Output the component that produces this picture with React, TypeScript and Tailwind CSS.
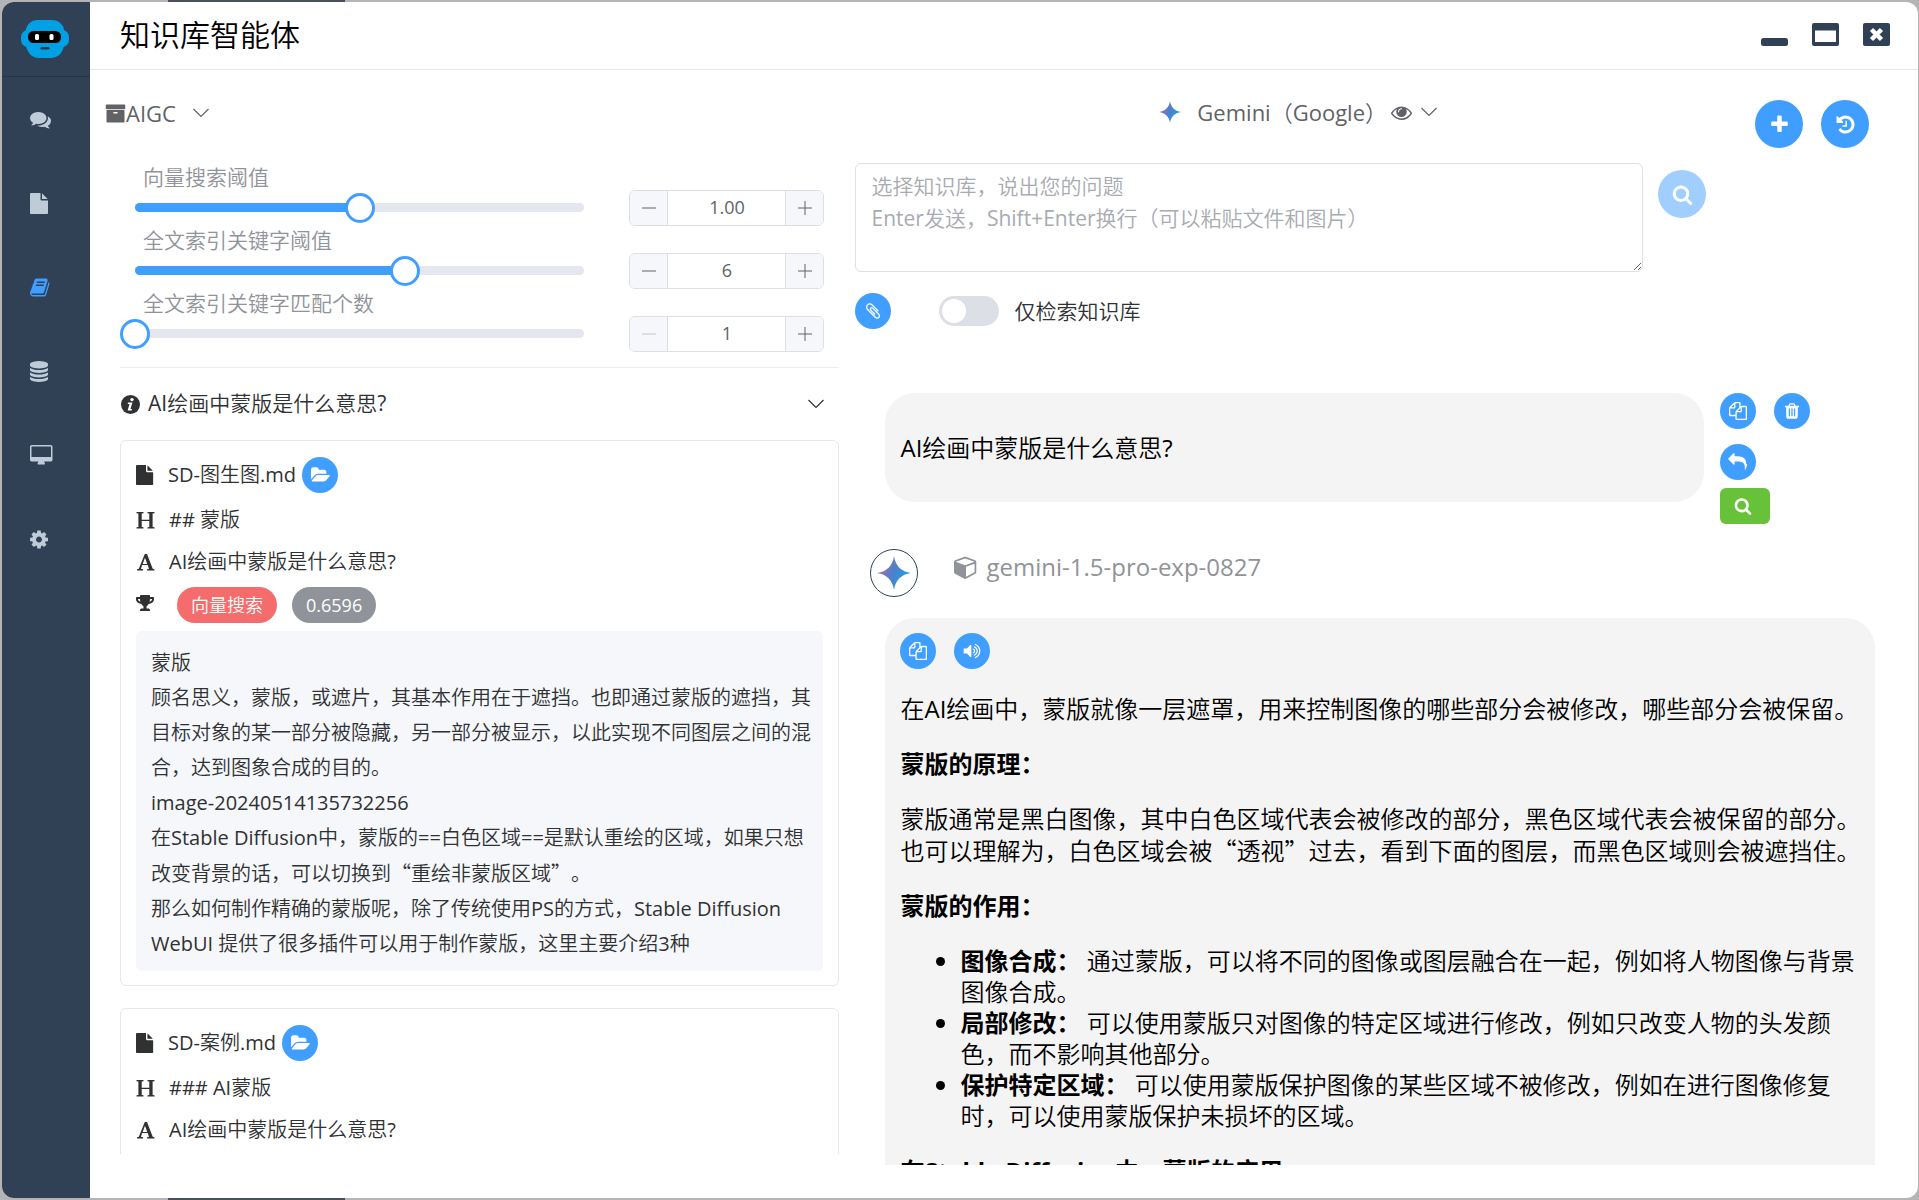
import React, { ReactNode, useState } from 'react';
import { FaTrophy } from 'react-icons/fa';
import clsx from 'clsx';

// ============================================================================
// Icons
// ============================================================================

const ICONS = {
  comments:
    'M1408 768q0 139-94 257t-256.5 186.5-353.5 68.5q-86 0-176-16-124 88-278 128-36 9-86 16h-3q-11 0-20.5-8t-11.5-21q-1-3-1-6.5t.5-6.5 2-6l2.5-5t3.5-5.5 4-5 4.5-5 4-4.5q5-6 23-25t26-29.5 22.5-29 25-38.5 20.5-44q-124-72-195-177t-71-224q0-139 94-257t256.5-186.5 353.5-68.5 353.5 68.5 256.5 186.5 94 257zm384 256q0 120-71 224.5t-195 176.5q10 24 20.5 44t25 38.5 22.5 29 26 29.5 23 25q1 1 4 4.500t4.500 5 4 5 3.500 5.500l2.500 5t2 6 .5 6.500-1 6.500q-3 14-13 22t-22 7q-50-7-86-16-154-40-278-128-90 16-176 16-271 0-472-132 58 4 88 4 161 0 309-45t264-129q125-92 192-212t67-254q0-77-23-152 129 71 204 178t75 230z',
  file: 'M1024 512v-472q22 14 36 28l408 408q14 14 28 36h-472zm-128 32q0 40 28 68t68 28h544v1056q0 40-28 68t-68 28h-1344q-40 0-68-28t-28-68v-1600q0-40 28-68t68-28h800v544z',
  book: 'M1639 478q40 57 18 129l-275 906q-19 64-76.5 107.5t-122.5 43.5h-923q-77 0-148.5-53.5t-99.5-131.5q-24-67-2-127 0-4 3-27t4-37q1-8-3-21.5t-3-19.5q2-11 8-21t16.5-23.5 16.5-23.5q23-38 45-91.5t30-91.5q3-10 .5-30t-.5-28q3-11 17-28t17-23q21-36 42-92t25-90q1-9-2.5-32t.5-28q4-13 22-30.5t22-22.5q19-26 42.5-84.5t27.5-96.5q1-8-3-25.5t-2-26.5q2-8 9-18t18-23 17-21q8-12 16.5-30.5t15-35 16-36 19.5-32 26.5-23.5 36-11.5 47.5 5.5l-1 3q38-9 51-9h761q74 0 114 56t18 130l-274 906q-36 119-71.5 153.5t-128.5 34.5h-869q-27 0-38 15-11 16-1 43 24 70 144 70h923q29 0 56-15.5t35-41.5l300-987q7-22 5-57 38 15 59 43zm-1064 2q-4 13 2 22.5t20 9.5h608q13 0 25.5-9.5t16.5-22.5l21-64q4-13-2-22.5t-20-9.5h-608q-13 0-25.5 9.5t-16.5 22.5zm-83 256q-4 13 2 22.5t20 9.5h608q13 0 25.5-9.5t16.5-22.5l21-64q4-13-2-22.5t-20-9.5h-608q-13 0-25.5 9.5t-16.5 22.5z',
  database:
    'M768 768q237 0 443-43t325-127v170q0 69-103 128t-280 93.5-385 34.5-385-34.5-280-93.5-103-128v-170q119 84 325 127t443 43zm0 768q237 0 443-43t325-127v170q0 69-103 128t-280 93.5-385 34.5-385-34.5-280-93.5-103-128v-170q119 84 325 127t443 43zm0-384q237 0 443-43t325-127v170q0 69-103 128t-280 93.5-385 34.5-385-34.5-280-93.5-103-128v-170q119 84 325 127t443 43zm0-1152q208 0 385 34.5t280 93.5 103 128v128q0 69-103 128t-280 93.5-385 34.5-385-34.5-280-93.5-103-128v-128q0-69 103-128t280-93.5 385-34.5z',
  desktop:
    'M1792 992v-832q0-13-9.5-22.5t-22.5-9.5h-1600q-13 0-22.5 9.5t-9.5 22.5v832q0 13 9.5 22.5t22.5 9.5h1600q13 0 22.5-9.5t9.5-22.5zm128-832v1088q0 66-47 113t-113 47h-544q0 37 16 77.5t32 71 16 43.5q0 26-19 45t-45 19h-512q-26 0-45-19t-19-45q0-14 16-44t32-70 16-78h-544q-66 0-113-47t-47-113v-1088q0-66 47-113t113-47h1600q66 0 113 47t47 113z',
  cog: 'M1024 896q0-106-75-181t-181-75-181 75-75 181 75 181 181 75 181-75 75-181zm512-109v222q0 12-8 23t-20 13l-185 28q-19 54-39 91 35 50 107 138 10 12 10 25t-9 23q-27 37-99 108t-94 71q-12 0-26-9l-138-108q-44 23-91 38-16 136-29 186-7 28-36 28h-222q-14 0-24.5-8.5t-11.5-21.5l-28-184q-49-16-90-37l-141 107q-10 9-25 9-14 0-25-11-126-114-165-168-7-10-7-23 0-12 8-23 15-21 51-66.5t54-70.5q-27-50-41-99l-183-27q-13-2-21-12.5t-8-23.5v-222q0-12 8-23t19-13l186-28q14-46 39-92-40-57-107-138-10-12-10-24 0-10 9-23 26-36 98.5-107.5t94.5-71.5q13 0 26 10l138 107q44-23 91-38 16-136 29-186 7-28 36-28h222q14 0 24.5 8.5t11.5 21.5l28 184q49 16 90 37l142-107q9-9 24-9 13 0 25 10 129 119 165 170 7 8 7 22 0 12-8 23-15 21-51 66.5t-54 70.5q26 50 41 98l183 28q13 2 21 12.5t8 23.5z',
  search:
    'M1216 832q0-185-131.5-316.5t-316.5-131.5-316.5 131.5-131.5 316.5 131.5 316.5 316.5 131.5 316.5-131.5 131.5-316.5zm512 832q0 52-38 90t-90 38q-54 0-90-38l-343-342q-179 124-399 124-143 0-273.5-55.5t-225-150-150-225-55.5-273.5 55.5-273.5 150-225 225-150 273.5-55.5 273.5 55.5 225 150 150 225 55.5 273.5q0 220-124 399l343 343q37 37 37 90z',
  plus: 'M1600 736v192q0 40-28 68t-68 28h-416v416q0 40-28 68t-68 28h-192q-40 0-68-28t-28-68v-416h-416q-40 0-68-28t-28-68v-192q0-40 28-68t68-28h416v-416q0-40 28-68t68-28h192q40 0 68 28t28 68v416h416q40 0 68 28t28 68z',
  history:
    'M1664 896q0 156-61 298t-164 245-245 164-298 61q-172 0-327-72.5t-264-204.5q-7-10-6.5-22.5t8.5-20.5l137-138q10-9 25-9 16 2 23 12 73 95 179 147t225 52q104 0 198.5-40.5t163.5-109.5 109.5-163.5 40.5-198.5-40.5-198.5-109.5-163.5-163.5-109.5-198.5-40.5q-98 0-188 35.5t-160 101.5l137 138q31 30 14 69-17 40-59 40h-448q-26 0-45-19t-19-45v-448q0-42 40-59 39-17 69 14l130 129q107-101 244.5-156.5t284.5-55.5q156 0 298 61t245 164 164 245 61 298zm-640-288v448q0 14-9 23t-23 9h-320q-14 0-23-9t-9-23v-64q0-14 9-23t23-9h224v-352q0-14 9-23t23-9h64q14 0 23 9t9 23z',
  copy: 'M1696 384q40 0 68 28t28 68v1216q0 40-28 68t-68 28h-960q-40 0-68-28t-28-68v-288h-544q-40 0-68-28t-28-68v-672q0-40 20-88t48-76l408-408q28-28 76-48t88-20h416q40 0 68 28t28 68v328q68-40 128-40h416zm-544 213l-299 299h299v-299zm-640-384l-299 299h299v-299zm196 647l316-316v-416h-384v416q0 40-28 68t-68 28h-416v640h512v-256q0-40 20-88t48-76zm956 804v-1152h-384v416q0 40-28 68t-68 28h-416v640h896z',
  trash:
    'M704 1376v-704q0-14-9-23t-23-9h-64q-14 0-23 9t-9 23v704q0 14 9 23t23 9h64q14 0 23-9t9-23zm256 0v-704q0-14-9-23t-23-9h-64q-14 0-23 9t-9 23v704q0 14 9 23t23 9h64q14 0 23-9t9-23zm256 0v-704q0-14-9-23t-23-9h-64q-14 0-23 9t-9 23v704q0 14 9 23t23 9h64q14 0 23-9t9-23zm-544-992h448l-48-117q-7-9-17-11h-317q-10 2-17 11zm928 32v64q0 14-9 23t-23 9h-96v948q0 83-47 143.5t-113 60.5h-832q-66 0-113-58.5t-47-141.5v-952h-96q-14 0-23-9t-9-23v-64q0-14 9-23t23-9h309l70-167q15-37 54-63t79-26h320q40 0 79 26t54 63l70 167h309q14 0 23 9t9 23z',
  reply:
    'M1792 1120q0 166-127 451-3 7-10.5 24t-13.5 30-13 22q-12 17-28 17-15 0-23.5-10t-8.5-25q0-9 2.5-26.5t2.5-23.5q5-68 5-123 0-112-19.5-200.5t-54-153.5-89-112-115.5-76-148.5-46-171.5-20-200-6h-224v256q0 26-19 45t-45 19-45-19l-512-512q-19-19-19-45t19-45l512-512q19-19 45-19t45 19 19 45v256h224q713 0 875 403 53 134 53 333z',
  folderOpen:
    'M1879 952q0 31-31 66l-336 396q-43 51-120.5 86.5t-143.5 35.5h-1088q-34 0-60.5-13t-26.5-43q0-31 31-66l336-396q43-51 120.5-86.5t143.5-35.5h1088q34 0 60.5 13t26.5 43zm-343-344v160h-832q-94 0-197 47.5t-164 119.5l-337 396-5 6q0-4-.5-12.5t-.5-12.5v-960q0-92 66-158t158-66h320q92 0 158 66t66 158v32h544q92 0 158 66t66 158z',
  paperclip:
    'M1596 1385q0 117-79 196t-196 79q-135 0-235-100l-777-776q-113-115-113-271 0-159 110-270t269-111q158 0 273 113l605 606q10 10 10 22 0 16-30.5 46.5t-46.5 30.5q-13 0-23-10l-606-607q-79-77-181-77-106 0-179 75t-73 181q0 105 76 181l776 777q63 63 145 63 64 0 106-42t42-106q0-82-63-145l-581-581q-26-24-60-24-29 0-48 19t-19 48q0 32 25 59l410 410q10 10 10 22 0 16-31 47t-47 31q-12 0-22-10l-410-410q-63-61-63-149 0-82 57-139t139-57q88 0 149 63l581 581q100 98 100 235z',
  volume:
    'M832 352v1088q0 26-19 45t-45 19-45-19l-333-333h-262q-26 0-45-19t-19-45v-384q0-26 19-45t45-19h262l333-333q19-19 45-19t45 19 19 45zm384 544q0 76-42.5 141.5t-112.5 93.5q-10 5-25 5-26 0-45-18.5t-19-45.5q0-21 12-35.5t29-25 34-23 29-36 12-56.5-12-56.5-29-36-34-23-29-25-12-35.5q0-27 19-45.5t45-18.5q15 0 25 5 70 27 112.5 93t42.5 142zm256 0q0 153-85 282.5t-225 188.5q-13 5-25 5-27 0-46-19t-19-45q0-39 39-59 56-29 76-44 74-54 115.5-135.5t41.5-173.5-41.5-173.5-115.5-135.5q-20-15-76-44-39-20-39-59 0-26 19-45t45-19q13 0 26 5 140 59 225 188.5t85 282.5zm256 0q0 230-127 422.5t-338 283.5q-13 5-26 5-26 0-45-19t-19-45q0-36 39-59 7-4 22.5-10.5t22.5-10.5q46-25 82-51 123-91 192-227t69-289-69-289-192-227q-36-26-82-51-7-4-22.5-10.5t-22.5-10.5q-39-23-39-59 0-26 19-45t45-19q13 0 26 5 211 91 338 283.5t127 422.5z',
  archive:
    'M1088 832q0-26-19-45t-45-19h-256q-26 0-45 19t-19 45 19 45 45 19h256q26 0 45-19t19-45zm576-192v960q0 26-19 45t-45 19h-1408q-26 0-45-19t-19-45v-960q0-26 19-45t45-19h1408q26 0 45 19t19 45zm64-448v256q0 26-19 45t-45 19h-1536q-26 0-45-19t-19-45v-256q0-26 19-45t45-19h1536q26 0 45 19t19 45z',
  eye: 'M1664 960q-152-236-381-353 61 104 61 225 0 185-131.5 316.5t-316.5 131.5-316.5-131.5-131.5-316.5q0-121 61-225-229 117-381 353 133 205 333.5 326.5t434.5 121.5 434.5-121.5 333.5-326.5zm-720-384q0-20-14-34t-34-14q-125 0-214.5 89.5t-89.5 214.5q0 20 14 34t34 14 34-14 14-34q0-86 61-147t147-61q20 0 34-14t14-34zm848 384q0 34-20 69-140 230-376.5 368.5t-499.5 138.5-499.5-139-376.5-368q-20-35-20-69t20-69q140-229 376.5-368t499.5-139 499.5 139 376.5 368q20 35 20 69z',
  cube: 'M896 1629l640-349v-636l-640 233v752zm-64-865l698-254-698-254-698 254zm832-252v768q0 35-18 65t-49 47l-704 384q-28 16-61 16t-61-16l-704-384q-31-17-49-47t-18-65v-768q0-40 23-73t61-47l704-256q22-8 44-8t44 8l704 256q38 14 61 47t23 73z',
};

type IconName = keyof typeof ICONS;

interface IconProps {
  name: IconName;
  className?: string;
}

function Icon({ name, className = 'size-[21px]' }: IconProps) {
  return (
    <svg
      viewBox="0 0 1792 1792"
      fill="currentColor"
      aria-hidden="true"
      className={clsx('shrink-0 overflow-visible', className)}
    >
      <path d={ICONS[name]} />
    </svg>
  );
}

function Chevron() {
  return (
    <svg viewBox="0 0 18 18" className="size-[18px] shrink-0" fill="none" stroke="currentColor" strokeWidth="1.2" aria-hidden="true">
      <path d="M1.5 5 9 12.500l7.500-7.500" />
    </svg>
  );
}

function InfoIcon() {
  return (
    <svg viewBox="0 0 19 19" className="mr-2 ml-px size-[19px] shrink-0" aria-hidden="true">
      <circle cx="9.500" cy="9.500" r="9.500" fill="currentColor" />
      <circle cx="11" cy="4.600" r="1.700" fill="#fff" />
      <path d="M7 7.400h4.400l-1.900 6.600h1.500l-.4 1.400H6.600l1.900-6.500H6.700z" fill="#fff" />
    </svg>
  );
}

// Slab "H" used in front of a matched heading
function HeadingIcon() {
  return (
    <svg viewBox="0 0 19 19" className="mr-3.5 size-[19px] shrink-0" fill="currentColor" aria-hidden="true">
      <path d="M.5 1h7v1.200l-1.800.3V8.700h7.600V2.500l-1.800-.3V1h7v1.200l-1.900.3v13.500l1.900.3v1.200h-7v-1.200l1.800-.3v-5.900H5.700V16l1.800.3v1.200h-7v-1.200l1.900-.3V2.500L.5 2.200z" />
    </svg>
  );
}

function FontIcon() {
  return (
    <svg viewBox="0 0 19 19" className="mr-3.5 size-[19px] shrink-0" fill="currentColor" fillRule="evenodd" aria-hidden="true">
      <path d="M8.800 1h2.200l5.700 14.800 1.700.4v1.300h-7.400v-1.300l2-.3-1.300-3.800H6.200l-1.300 3.700 2.200.4v1.300H1v-1.300l1.800-.4zM9 4.800 6.700 10.900h4.500z" />
    </svg>
  );
}

function GeminiStar({ id, className }: { id: string; className?: string }) {
  return (
    <svg viewBox="0 0 24 24" className={className} aria-hidden="true">
      <defs>
        <linearGradient id={id} x1="2" y1="8" x2="22" y2="16" gradientUnits="userSpaceOnUse">
          <stop offset="0" stopColor="#a66fb5" />
          <stop offset="0.45" stopColor="#4f7fcb" />
          <stop offset="1" stopColor="#1ba1e3" />
        </linearGradient>
      </defs>
      <path d="M12 0c.9 6.800 5.200 11.100 12 12-6.800.9-11.100 5.200-12 12-.9-6.800-5.200-11.100-12-12 6.800-.9 11.100-5.200 12-12z" fill={`url(#${id})`} />
    </svg>
  );
}

function RobotLogo() {
  return (
    <svg viewBox="0 0 48 38" className="h-[38px] w-12" aria-label="logo">
      <rect x="0" y="10" width="48" height="17" rx="7" fill="#00a0e4" />
      <path d="M17 0h14c7 0 11 4 12.500 11 .8 4 .8 10-.5 15-1.500 7-6 12-13 12H18C11 38 6.500 33 5 26c-1.300-5-1.300-11-.5-15C6 4 10 0 17 0z" fill="#00a0e4" />
      <rect x="7" y="11" width="33" height="12" rx="5.500" fill="#000" />
      <rect x="14" y="14" width="4" height="6" rx="1.500" fill="#fff" />
      <rect x="28.500" y="14" width="4" height="6" rx="1.500" fill="#fff" />
      <rect x="19.500" y="27" width="9" height="2.600" rx="1.300" fill="#12384d" />
    </svg>
  );
}

// ============================================================================
// Shared controls
// ============================================================================

interface RoundButtonProps {
  icon: IconName;
  label: string;
  large?: boolean;
  disabled?: boolean;
}

function RoundButton({ icon, label, large, disabled }: RoundButtonProps) {
  return (
    <button
      type="button"
      aria-label={label}
      disabled={disabled}
      className={clsx(
        'flex shrink-0 items-center justify-center rounded-full text-white',
        large ? 'size-12' : 'size-9',
        disabled ? 'bg-[#a0cfff]' : 'bg-[#409eff]'
      )}
    >
      <Icon name={icon} className={large ? 'size-[21px]' : 'size-[18px]'} />
    </button>
  );
}

// ============================================================================
// Sidebar
// ============================================================================

const NAV_ITEMS: { icon: IconName; label: string; active?: boolean }[] = [
  { icon: 'comments', label: '聊天' },
  { icon: 'file', label: '文件' },
  { icon: 'book', label: '知识库', active: true },
  { icon: 'database', label: '数据' },
  { icon: 'desktop', label: '桌面' },
  { icon: 'cog', label: '设置' },
];

function Sidebar() {
  return (
    <aside className="w-22 shrink-0 bg-[#304156]">
      <div className="flex h-[75px] items-center border-b border-[#25344a] pl-[19px]">
        <RobotLogo />
      </div>
      <nav>
        {NAV_ITEMS.map((item) => (
          <a
            key={item.icon}
            href={`#${item.icon}`}
            aria-label={item.label}
            className={clsx(
              'flex h-21 items-center pl-7',
              item.active ? 'text-[#409eff]' : 'text-[#bfcbd9]'
            )}
          >
            <Icon name={item.icon} />
          </a>
        ))}
      </nav>
    </aside>
  );
}

// ============================================================================
// Title bar
// ============================================================================

function TitleBar() {
  return (
    <header className="flex h-17 shrink-0 items-center justify-between border-b border-[#e4e7ed] pr-7 pb-0.5 pl-[30px]">
      <h1 className="text-[30px] leading-9 text-black">知识库智能体</h1>
      <div className="flex gap-6 text-[#304156]">
        <button type="button" aria-label="最小化">
          <svg viewBox="0 0 27 23" className="h-[23px] w-[27px]" fill="currentColor">
            <rect y="15" width="27" height="8" rx="2.500" />
          </svg>
        </button>
        <button type="button" aria-label="最大化">
          <svg viewBox="0 0 27 23" className="h-[23px] w-[27px]" fill="currentColor" fillRule="evenodd">
            <path d="M2 0h23a2 2 0 0 1 2 2v19a2 2 0 0 1-2 2H2a2 2 0 0 1-2-2V2a2 2 0 0 1 2-2zM3 7.500v11.500h21V7.500z" />
          </svg>
        </button>
        <button type="button" aria-label="关闭">
          <svg viewBox="0 0 27 23" className="h-[23px] w-[27px]">
            <rect width="27" height="23" rx="2" fill="currentColor" />
            <path d="M8.500 6.500l10 10M18.500 6.500l-10 10" stroke="#fff" strokeWidth="4.500" />
          </svg>
        </button>
      </div>
    </header>
  );
}

// ============================================================================
// Search settings
// ============================================================================

interface SliderRowProps {
  id: string;
  label: string;
  min: number;
  max: number;
  step: number;
  initial: number;
  digits?: number;
}

function SliderRow({ id, label, min, max, step, initial, digits = 0 }: SliderRowProps) {
  const [value, setValue] = useState(initial);
  const percent = ((value - min) / (max - min)) * 100;
  const change = (next: number) => setValue(Math.min(max, Math.max(min, next)));

  return (
    <div className="flex h-[63px] items-end justify-between">
      <div className="flex-1">
        <label htmlFor={id} className="block pl-2 text-[21px] leading-7 text-[#909399]">
          {label}
        </label>
        <div className="relative mt-3 mb-3.5 h-[9px] rounded-full bg-[#e4e7ed]">
          <div className="h-full rounded-full bg-[#409eff]" style={{ width: `${percent}%` }} />
          <input
            id={id}
            type="range"
            min={min}
            max={max}
            step={step}
            value={value}
            onChange={(e) => change(Number(e.target.value))}
            className="absolute -inset-x-[15px] -top-[11px] h-[31px] appearance-none bg-transparent [&::-webkit-slider-thumb]:size-[30px] [&::-webkit-slider-thumb]:appearance-none [&::-webkit-slider-thumb]:rounded-full [&::-webkit-slider-thumb]:border-3 [&::-webkit-slider-thumb]:border-[#409eff] [&::-webkit-slider-thumb]:bg-white"
          />
        </div>
      </div>
      <div className="ml-[45px] flex h-9 w-[195px] overflow-hidden rounded-md border border-[#dcdfe6] text-[#606266]">
        <button
          type="button"
          aria-label="减少"
          disabled={value <= min}
          onClick={() => change(value - step)}
          className="flex w-[38px] items-center justify-center border-r border-[#dcdfe6] bg-[#f5f7fa] disabled:text-[#c0c4cc]"
        >
          <svg viewBox="0 0 14 14" className="size-3.5" stroke="currentColor" strokeWidth="1">
            <path d="M0 7h14" />
          </svg>
        </button>
        <input
          type="text"
          aria-label={`${label}数值`}
          value={value.toFixed(digits)}
          onChange={(e) => change(Number(e.target.value) || min)}
          className="min-w-0 flex-1 pb-0.5 text-center text-[18px] leading-8"
        />
        <button
          type="button"
          aria-label="增加"
          onClick={() => change(value + step)}
          className="flex w-[38px] items-center justify-center border-l border-[#dcdfe6] bg-[#f5f7fa]"
        >
          <svg viewBox="0 0 14 14" className="size-3.5" stroke="currentColor" strokeWidth="1">
            <path d="M0 7h14M7 0v14" />
          </svg>
        </button>
      </div>
    </div>
  );
}

// ============================================================================
// Search results
// ============================================================================

interface ResultCardProps {
  file: string;
  heading: string;
  question: string;
  score?: string;
  children?: ReactNode;
}

function ResultCard({ file, heading, question, score, children }: ResultCardProps) {
  return (
    <article className="rounded-md border border-[#e4e7ed] px-[15px] pt-4 pb-3.5 text-xl text-[#303133]">
      <div className="flex h-9 items-center">
        <span className="w-8">
          <Icon name="file" className="size-5" />
        </span>
        <span>{file}</span>
        <span className="pl-1.5">
          <RoundButton icon="folderOpen" label="打开文件" />
        </span>
      </div>
      <div className="mt-1.5 flex h-[42px] items-center">
        <HeadingIcon />
        {heading}
      </div>
      <div className="flex h-[42px] items-center">
        <FontIcon />
        {question}
      </div>
      {score && (
        <div className="mt-1 flex h-9 items-center gap-[15px]">
          <FaTrophy className="mr-2 mb-1 size-[18px]" />
          <span className="rounded-full bg-[#f56c6c] px-3.5 text-[18px] leading-9 text-white">向量搜索</span>
          <span className="rounded-full bg-[#909399] px-3.5 text-[18px] leading-9 text-white">{score}</span>
        </div>
      )}
      {children && (
        <div className="mt-2 rounded-md bg-[#f5f7fa] pt-3.5 pr-2 pb-2.5 pl-[15px] leading-[35px]">{children}</div>
      )}
    </article>
  );
}

function KnowledgePanel() {
  return (
    <section className="flex w-[41%] shrink-0 flex-col pb-11 pl-[30px]">
      <button type="button" className="-ml-[15px] flex h-[86px] items-center self-start text-[22px] text-[#606266]">
        <Icon name="archive" />
        AIGC
        <span className="pl-4">
          <Chevron />
        </span>
      </button>
      <div className="mt-[7px] px-[15px]">
        <SliderRow id="vector" label="向量搜索阈值" min={0} max={2} step={0.01} initial={1} digits={2} />
        <SliderRow id="keyword" label="全文索引关键字阈值" min={0} max={10} step={1} initial={6} />
        <SliderRow id="matches" label="全文索引关键字匹配个数" min={1} max={10} step={1} initial={1} />
      </div>
      <button
        type="button"
        className="mt-[15px] flex h-[73px] shrink-0 items-center border-t border-[#ebeef5] pr-3.5 text-[21px] text-[#303133]"
      >
        <InfoIcon />
        AI绘画中蒙版是什么意思?
        <span className="ml-auto">
          <Chevron />
        </span>
      </button>
      <div className="flex min-h-0 flex-1 flex-col gap-[22px] overflow-hidden *:shrink-0">
        <ResultCard file="SD-图生图.md" heading="## 蒙版" question="AI绘画中蒙版是什么意思?" score="0.6596">
          <p>蒙版</p>
          <p>
            顾名思义，蒙版，或遮片，其基本作用在于遮挡。也即通过蒙版的遮挡，其目标对象的某一部分被隐藏，另一部分被显示，以此实现不同图层之间的混合，达到图象合成的目的。
          </p>
          <p>image-20240514135732256</p>
          <p>
            在Stable Diffusion中，蒙版的==白色区域==是默认重绘的区域，如果只想改变背景的话，可以切换到
            <span className="font-['Noto_Sans_CJK_SC_DemiLight','Noto_Sans_CJK_SC',sans-serif]">“重绘非蒙版区域”</span>。
          </p>
          <p>
            那么如何制作精确的蒙版呢，除了传统使用PS的方式，Stable Diffusion WebUI 提供了很多插件可以用于制作蒙版，这里主要介绍3种
          </p>
        </ResultCard>
        <div className="flex min-h-36 flex-col *:flex-1">
          <ResultCard file="SD-案例.md" heading="### AI蒙版" question="AI绘画中蒙版是什么意思?" />
        </div>
      </div>
    </section>
  );
}

// ============================================================================
// Chat
// ============================================================================

const USES = [
  { name: '图像合成：', text: '通过蒙版，可以将不同的图像或图层融合在一起，例如将人物图像与背景图像合成。' },
  { name: '局部修改：', text: '可以使用蒙版只对图像的特定区域进行修改，例如只改变人物的头发颜色，而不影响其他部分。' },
  { name: '保护特定区域：', text: '可以使用蒙版保护图像的某些区域不被修改，例如在进行图像修复时，可以使用蒙版保护未损坏的区域。' },
];

function QuestionForm() {
  return (
    <form className="flex flex-col gap-[21px]">
      <div className="flex gap-[15px] pr-[212px]">
        <textarea
          aria-label="问题"
          placeholder={'选择知识库，说出您的问题\nEnter发送，Shift+Enter换行（可以粘贴文件和图片）'}
          className="h-[109px] flex-1 resize-y rounded-md border border-[#dcdfe6] px-[15px] py-1.5 text-[21px] leading-8 placeholder:text-[#a8abb2]"
        />
        <div className="pt-[7px]">
          <RoundButton icon="search" label="搜索" large disabled />
        </div>
      </div>
      <div className="flex items-center">
        <RoundButton icon="paperclip" label="附件" />
        <label className="ml-12 flex items-center gap-[15px] text-[21px] leading-9 text-[#303133]">
          <input
            type="checkbox"
            role="switch"
            className="h-[30px] w-15 appearance-none rounded-full bg-[#dcdfe6] before:m-[3px] before:block before:size-6 before:rounded-full before:bg-white checked:bg-[#409eff] checked:before:ml-[33px]"
          />
          仅检索知识库
        </label>
      </div>
    </form>
  );
}

function Question() {
  return (
    <div className="flex items-start pl-[30px]">
      <div className="flex h-[109px] flex-1 items-center rounded-[30px] bg-[#f4f4f4] px-[15px] text-2xl text-black">
        AI绘画中蒙版是什么意思?
      </div>
      <div className="ml-4 grid w-[198px] shrink-0 grid-cols-[36px_36px] gap-x-[18px]">
        <RoundButton icon="copy" label="复制" />
        <RoundButton icon="trash" label="删除" />
        <div className="col-span-2 mt-[15px]">
          <RoundButton icon="reply" label="重试" />
        </div>
        <button
          type="button"
          aria-label="查看检索结果"
          className="col-span-2 mt-2 flex h-9 w-[50px] items-center rounded-md bg-[#67c23a] pl-3.5 text-white"
        >
          <Icon name="search" className="size-[18px]" />
        </button>
      </div>
    </div>
  );
}

function Answer() {
  return (
    <>
      <div className="mt-[25px] flex items-center pl-[15px] text-[#909399]">
        <span className="flex size-12 items-center justify-center rounded-full border border-[#304156]">
          <GeminiStar id="avatar-star" className="size-[34px]" />
        </span>
        <span className="flex items-center gap-2 pb-3 pl-9 text-2xl">
          <Icon name="cube" className="size-6" />
          gemini-1.5-pro-exp-0827
        </span>
      </div>
      <div className="mt-[21px] mr-[43px] ml-[30px] rounded-[30px] bg-[#f4f4f4] py-[15px] pr-2 pl-[15px] text-2xl leading-[31px] text-black">
        <div className="mb-6 flex gap-[18px]">
          <RoundButton icon="copy" label="复制" />
          <RoundButton icon="volume" label="朗读" />
        </div>
        <div className="flex flex-col gap-6">
          <p>在AI绘画中，蒙版就像一层遮罩，用来控制图像的哪些部分会被修改，哪些部分会被保留。</p>
          <h2 className="font-['Open_Sans','Noto_Sans_CJK_SC',sans-serif] font-bold">蒙版的原理：</h2>
          <p>
            蒙版通常是黑白图像，其中白色区域代表会被修改的部分，黑色区域代表会被保留的部分。也可以理解为，白色区域会被
            <span className="font-['Noto_Sans_CJK_SC_DemiLight','Noto_Sans_CJK_SC',sans-serif]">“透视”</span>
            过去，看到下面的图层，而黑色区域则会被遮挡住。
          </p>
          <h2 className="font-['Open_Sans','Noto_Sans_CJK_SC',sans-serif] font-bold">蒙版的作用：</h2>
          <ul className="list-disc pl-15">
            {USES.map((use) => (
              <li key={use.name}>
                <strong className="font-['Open_Sans','Noto_Sans_CJK_SC',sans-serif] font-bold">{use.name}</strong>{' '}
                {use.text}
              </li>
            ))}
          </ul>
          <h2 className="font-['Open_Sans','Noto_Sans_CJK_SC',sans-serif] font-bold">
            在Stable Diffusion中，蒙版的应用
          </h2>
        </div>
      </div>
    </>
  );
}

function ChatPanel() {
  return (
    <section className="flex min-w-0 flex-1 flex-col pb-[33px] pl-4">
      <div className="flex h-[93px] shrink-0 items-start justify-end gap-[18px] pt-[30px] pr-[49px]">
        <button type="button" className="mr-[299px] flex h-6 items-center text-[22px] text-[#606266]">
          <GeminiStar id="model-star" className="mr-4 size-[22px]" />
          Gemini（Google）
          <span className="ml-1 flex items-center gap-2">
            <Icon name="eye" className="size-[21px]" />
            <Chevron />
          </span>
        </button>
        <RoundButton icon="plus" label="新建对话" large />
        <RoundButton icon="history" label="历史记录" large />
      </div>
      <QuestionForm />
      <div className="mt-16 min-h-0 flex-1 overflow-hidden">
        <Question />
        <Answer />
      </div>
    </section>
  );
}

// ============================================================================
// App
// ============================================================================

function DesktopEdge() {
  return (
    <div className="h-0.5 shrink-0 pl-[168px]">
      <div className="h-full w-[177px] bg-[#49505e]" />
    </div>
  );
}

export default function App() {
  return (
    <div
      lang="zh-CN"
      className="flex h-screen flex-col overflow-hidden bg-[#b4b4b4] font-['Open_Sans','Noto_Sans_CJK_SC_DemiLight','Noto_Sans_CJK_SC',sans-serif] [text-spacing-trim:space-all]"
    >
      <DesktopEdge />
      <div className="mr-px ml-0.5 flex min-h-0 flex-1 overflow-hidden rounded-xl bg-white">
        <Sidebar />
        <div className="flex min-w-0 flex-1 flex-col">
          <TitleBar />
          <main className="flex min-h-0 flex-1">
            <KnowledgePanel />
            <ChatPanel />
          </main>
        </div>
      </div>
      <DesktopEdge />
    </div>
  );
}
